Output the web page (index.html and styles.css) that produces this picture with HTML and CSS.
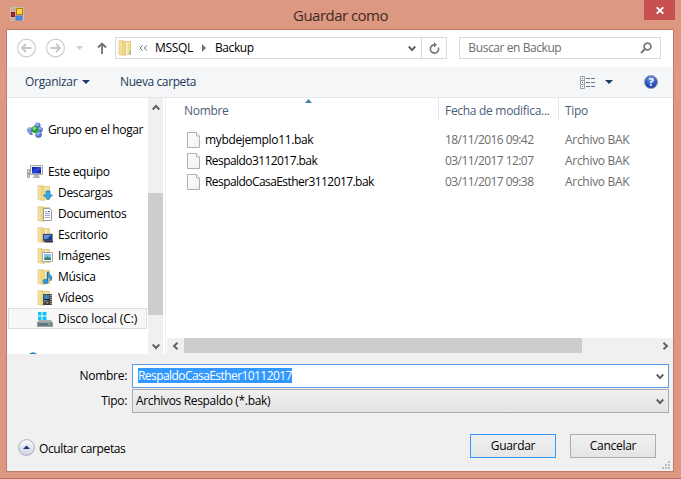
FILE: index.html
```html
<!DOCTYPE html>
<html lang="es">
<head>
<meta charset="utf-8">
<title>Guardar como</title>
<link rel="stylesheet" href="styles.css">
</head>
<body>
<svg class="defs" width="0" height="0">
  <defs>
    <linearGradient id="gold" x1="0" x2="1"><stop offset="0" stop-color="#f9ecb5"/><stop offset=".6" stop-color="#ecd27c"/><stop offset="1" stop-color="#f5e399"/></linearGradient>
    <linearGradient id="paper" x1="0" y1="0" x2="1" y2="1"><stop offset="0" stop-color="#fff"/><stop offset="1" stop-color="#efefef"/></linearGradient>
    <radialGradient id="ball" cx=".4" cy=".3" r=".8"><stop offset="0" stop-color="#a9c4f5"/><stop offset="1" stop-color="#2546a8"/></radialGradient>
    <linearGradient id="screen" x1="0" y1="0" x2="1" y2="1"><stop offset="0" stop-color="#0a1590"/><stop offset=".5" stop-color="#2c49dc"/><stop offset="1" stop-color="#0714a0"/></linearGradient>
    <linearGradient id="round" x1="0" y1="0" x2="0" y2="1"><stop offset="0" stop-color="#fff"/><stop offset=".5" stop-color="#e2e5ec"/><stop offset="1" stop-color="#d2d7e4"/></linearGradient>
    <symbol id="folder" viewBox="0 0 16 16">
      <path d="M5 1.500h7.500v13H5z" fill="#f0db91" stroke="#dcc47c" stroke-width=".8"/>
      <path d="M1 .8h5l1.300 1.400v13.300L1 14.600z" fill="url(#gold)" stroke="#d9c078" stroke-width=".7"/>
      <path d="M8 2.300h1.500v12.200H8z" fill="#fff3bd"/>
    </symbol>
    <symbol id="file" viewBox="0 0 14 16">
      <path d="M.5.5h9l3 3.500v11.500H.5z" fill="url(#paper)" stroke="#b0b0b0"/><path d="M9.500.5v3.500h3" fill="#f8f8f8" stroke="#b5b5b5"/>
    </symbol>
    <symbol id="down" viewBox="0 0 8 7"><path d="M.7 1.500L4 5l3.300-3.500" fill="none" stroke="#606060" stroke-width="1.900"/></symbol>
  </defs>
</svg>
<div class="window">
  <header class="titlebar">
    <svg class="app-icon" width="14" height="14" viewBox="0 0 14 14"><rect width="14" height="14" fill="#c7b9b4"/><rect x="1.5" y="1.5" width="4" height="2.5" fill="#dfa48f"/><rect x="6.5" y="1.5" width="6" height="6" fill="#ffd43e" stroke="#b98000"/><rect x="1.5" y="5.5" width="3" height="4" fill="#c3231e" stroke="#8a1411"/><rect x="6" y="9" width="6" height="4" fill="#4d8cf0" stroke="#3265bd" stroke-width=".7"/><path d="M1.5 11h1.2v2H1.5zM3.8 11H5v2H3.8z" fill="#df9e8a"/></svg>
    <h1 class="title">Guardar como</h1>
    <button class="close" aria-label="Cerrar"><svg width="8" height="7" viewBox="0 0 8 7"><path d="M.7.3l6.6 6.4M7.3.3L.7 6.7" stroke="#fff" stroke-width="1.8"/></svg></button>
  </header>
  <main class="dialog">
    <nav class="address-row">
      <svg class="nav-arrow" width="20" height="20" viewBox="0 0 20 20"><circle cx="9.500" cy="10" r="8.900" fill="none" stroke="#cfcfcf" stroke-width="1.2"/><path d="M14.500 10H5.500M9 6L5 10l4 4" fill="none" stroke="#c6c6c6" stroke-width="1.8"/></svg>
      <svg class="nav-arrow forward" width="20" height="20" viewBox="0 0 20 20"><circle cx="9.500" cy="10" r="8.900" fill="none" stroke="#cfcfcf" stroke-width="1.2"/><path d="M4.500 10h9M10 6l4 4-4 4" fill="none" stroke="#c6c6c6" stroke-width="1.8"/></svg>
      <svg class="recent" width="7" height="4" viewBox="0 0 7 4"><path d="M0 0h7L3.5 4z" fill="#cfcfcf"/></svg>
      <svg class="up" width="10" height="12" viewBox="0 0 10 12"><path d="M5 12V2M1 5.500l4-4 4 4" fill="none" stroke="#727272" stroke-width="1.800"/></svg>
      <div class="address">
        <svg class="address-folder" width="16" height="16"><use href="#folder"/><rect x="11.5" y="11" width="1" height="3" fill="#4fb4d4"/></svg>
        <svg class="chevrons" width="9" height="6" viewBox="0 0 9 6"><path d="M3.500.500L1 3l2.500 2.500M7.800.500L5.300 3l2.500 2.500" fill="none" stroke="#666" stroke-width="1"/></svg>
        <span class="crumb first">MSSQL</span>
        <svg class="sep" width="4" height="8" viewBox="0 0 4 8"><path d="M0 0l4 4-4 4z" fill="#707070"/></svg>
        <span class="crumb second">Backup</span>
        <svg class="address-down" width="8" height="7"><use href="#down"/></svg>
        <span class="refresh"><svg width="11" height="12" viewBox="0 0 11 12"><path d="M9.300 5.500A4.100 4.100 0 1 1 5 2.900" fill="none" stroke="#777" stroke-width="1.600"/><path d="M5 0v5.500L8 2.700z" fill="#777"/></svg></span>
      </div>
      <div class="search"><span>Buscar en Backup</span><svg width="12" height="12" viewBox="0 0 12 12"><circle cx="7.500" cy="4.500" r="3.400" fill="none" stroke="#777" stroke-width="1.800"/><path d="M5 7L1 11" stroke="#777" stroke-width="2.200"/></svg></div>
    </nav>
    <div class="toolbar">
      <span class="organize">Organizar</span><svg width="8" height="4" viewBox="0 0 8 4"><path d="M0 0h8L4 4z" fill="#1e3b6e"/></svg>
      <span class="new-folder">Nueva carpeta</span>
      <svg class="view" width="16" height="13" viewBox="0 0 16 13"><path d="M.500.500h4v12h-4zM.500 4.500h4M.500 8.500h4" fill="#fff" stroke="#98a0aa"/><path d="M2 2h1v1H2zM2 10h1v1H2z" fill="#456"/><path d="M2 6h1v1H2z" fill="#c22"/><path d="M6 2.500h4M11 2.500h4M6 6.500h4M11 6.500h4M6 10.500h4M11 10.500h4" stroke="#667386"/></svg>
      <svg class="view-down" width="8" height="4" viewBox="0 0 8 4"><path d="M0 0h8L4 4z" fill="#173a63"/></svg>
      <span class="help">?</span>
    </div>
    <div class="browser">
      <aside class="places">
        <div class="place root group"><svg width="16" height="16" viewBox="0 0 16 16"><g fill="url(#ball)"><circle cx="10.500" cy="3.500" r="3"/><circle cx="3" cy="8" r="2.800"/><circle cx="13.200" cy="7.500" r="2.600"/><circle cx="11.500" cy="12.500" r="3.300"/><path d="M1 8.500q3 0 5 4l-2 .500Q1 12 1 8.500z"/></g><circle cx="8" cy="7.500" r="3.600" fill="#2f9d43"/><circle cx="7.400" cy="6.300" r="1.600" fill="#94dc91"/></svg>Grupo en el hogar</div>
        <div class="place root"><svg width="16" height="16" viewBox="0 0 16 16"><path d="M.5 5.500h2v8h-2z" fill="#ddd" stroke="#888" stroke-width=".7"/><path d="M1 9h1v1.500H1z" fill="#31a52e"/><path d="M3.500 1.500h12v9h-12z" fill="#eee" stroke="#aaa"/><path d="M5 3h9v6.500H5z" fill="url(#screen)"/><path d="M7 11h5v1.500l2 1.500H5l2-1.500z" fill="#b2b2b2"/></svg>Este equipo</div>
        <div class="place"><svg width="16" height="16" viewBox="0 0 16 16"><use href="#folder"/><path d="M9 6h4v4h2.500l-4.500 5-4.500-5H9z" fill="#36a6e8" stroke="#1a78b8" stroke-width=".7"/></svg>Descargas</div>
        <div class="place"><svg width="16" height="16" viewBox="0 0 16 16"><use href="#folder"/><path d="M6.500 2.500h6l2 2v10h-8z" fill="#fff" stroke="#999"/><path d="M8 5.500h2M8 7.500h5M8 9.500h5M8 11.500h5" stroke="#8cabd6"/><path d="M11 5h2v1h-2z" fill="#36b"/></svg>Documentos</div>
        <div class="place"><svg width="16" height="16" viewBox="0 0 16 16"><use href="#folder"/><path d="M6 7h9.500v7H6z" fill="#203f86" stroke="#777" stroke-width=".5"/><path d="M7 8h7l-4 4H7z" fill="#638ed2"/><path d="M7 14h9v1.500H8z" fill="#333"/></svg>Escritorio</div>
        <div class="place"><svg width="16" height="16" viewBox="0 0 16 16"><use href="#folder"/><path d="M5.500 4.500h10v9h-10z" fill="#fff" stroke="#a6a6a6"/><path d="M7 6h7v6H7z" fill="#7ec4e9"/><path d="M7 10.500l3-2 4 1.500v2H7z" fill="#398575"/></svg>Imágenes</div>
        <div class="place"><svg width="16" height="16" viewBox="0 0 16 16"><use href="#folder"/><path d="M11 2.500q.5 3 3.500 4.500 1 3-1 5 .500-3-2.500-4" fill="#3aa4e1" stroke="#1878b7" stroke-width=".8"/><path d="M10.500 3v9" stroke="#1878b7" stroke-width="1.500"/><ellipse cx="8.600" cy="12.500" rx="2.600" ry="2.200" fill="#269ce1" stroke="#126aa4" stroke-width=".6"/></svg>Música</div>
        <div class="place"><svg width="16" height="16" viewBox="0 0 16 16"><use href="#folder"/><path d="M6 4h9v11H6z" fill="#4c4c4c"/><path d="M7 5h5v9H7z" fill="#3d83bd"/><path d="M7 9.500h5M8 13l4-3v4H8z" stroke="#222" fill="#e79252"/><path d="M14 5v10" stroke="#eee" stroke-dasharray="1 1"/></svg>Vídeos</div>
        <div class="place selected"><svg width="16" height="16" viewBox="0 0 16 16"><path d="M2 9h12l2 2.500v4H0v-4z" fill="#a7adaf"/><path d="M.5 11.500h15v4H.5z" fill="#727b7f" stroke="#959b9e"/><path d="M2 13.500h9" stroke="#3a7785"/><path d="M11.500 13h2v1h-2z" fill="#78df48"/><path d="M1 1h3.500v3.500H1zM5.500 1h4v3.500h-4zM1 5.500h3.500V9H1zM5.500 5.500h4V9h-4z" fill="#10c4f2"/></svg>Disco local (C:)</div>
        <svg class="network" width="8" height="2" viewBox="0 0 8 2"><path d="M0 2Q4-1.500 8 2z" fill="#2e86b4"/></svg>
      </aside>
      <div class="vscroll">
        <svg width="8" height="7"><use href="#down" width="8" height="7" transform="rotate(180 4 3.500)"/></svg>
        <div class="vthumb"></div>
        <svg width="8" height="7"><use href="#down"/></svg>
      </div>
      <section class="files">
        <div class="grid head"><span class="name-head">Nombre<svg class="sort" width="7" height="4" viewBox="0 0 7 4"><path d="M3.500 0L7 4H0z" fill="#4684a8"/></svg></span><span class="divided">Fecha de modifica...</span><span class="divided">Tipo</span></div>
        <div class="grid file"><span class="name"><svg width="14" height="16"><use href="#file"/></svg>mybdejemplo11.bak</span><span class="date">18/11/2016 09:42</span><span>Archivo BAK</span></div>
        <div class="grid file"><span class="name digits"><svg width="14" height="16"><use href="#file"/></svg>Respaldo3112017.bak</span><span class="date">03/11/2017 12:07</span><span>Archivo BAK</span></div>
        <div class="grid file"><span class="name digits"><svg width="14" height="16"><use href="#file"/></svg>RespaldoCasaEsther3112017.bak</span><span class="date">03/11/2017 09:38</span><span>Archivo BAK</span></div>
        <div class="hscroll">
          <svg width="7" height="8" viewBox="0 0 7 8"><use href="#down" width="8" height="7" transform="translate(7 0) rotate(90)"/></svg>
          <div class="hthumb"></div>
          <svg width="7" height="8" viewBox="0 0 7 8"><use href="#down" width="8" height="7" transform="translate(0 8) rotate(-90)"/></svg>
        </div>
      </section>
    </div>
    <footer class="bottom">
      <div class="field"><label>Nombre:</label><div class="box active"><span class="marked">RespaldoCasaEsther10112017</span><svg width="8" height="7"><use href="#down"/></svg></div></div>
      <div class="field"><label>Tipo:</label><div class="box"><span class="value">Archivos Respaldo (*.bak)</span><svg width="8" height="7"><use href="#down"/></svg></div></div>
      <div class="actions">
        <svg width="17" height="17" viewBox="0 0 17 17"><circle cx="8.500" cy="8.500" r="7.900" fill="url(#round)" stroke="#a5acbd"/><path d="M8.500 6.500L12 10H5z" fill="#1e3685"/></svg>
        <span class="hide">Ocultar carpetas</span>
        <button class="btn primary">Guardar</button><button class="btn">Cancelar</button>
      </div>
      <svg class="grip" width="8" height="8" viewBox="0 0 8 8"><path d="M6 0h2v2H6zM3 3h2v2H3zM6 3h2v2H6zM0 6h2v2H0zM3 6h2v2H3zM6 6h2v2H6z" fill="#bcbcbc"/></svg>
    </footer>
  </main>
</div>
</body>
</html>
```
FILE: styles.css
```css
* { box-sizing: border-box; }
body { margin: 0; font: 12px/16px "Open Sans", "Noto Sans", sans-serif; letter-spacing: -0.3px; color: #000; }
svg { display: block; flex: none; }
span { white-space: nowrap; }
.defs { position: absolute; }
.window { height: 479px; width: 681px; background: #dd9881; border-bottom: 1px solid #b3705c; overflow: hidden; padding: 0 7px; }
.titlebar { height: 29px; display: flex; align-items: flex-start; }
.app-icon { margin: 7px 0 0 3px; }
.title { margin: 5px 0 0 269px; width: 120px; font-size: 15px; line-height: 20px; font-weight: 400; letter-spacing: -0.52px; color: #3d2a25; white-space: nowrap; }
.close { margin: 0 -1px 0 auto; width: 31px; height: 20px; border: 0; padding: 0; background: #c75050; display: flex; align-items: center; justify-content: center; }
.dialog { margin: 0 0 0 -1px; height: 443px; border: 1px solid #be7c68; background: #fff; }
.address-row { height: 37px; display: flex; align-items: center; padding: 0 12px 1px 10px; }
.forward { margin-left: 9px; }
.recent { margin-left: 10px; }
.up { margin-left: 14px; }
.address { margin-left: 8px; width: 333px; height: 22px; border: 1px solid #d9d9d9; display: flex; align-items: center; }
.address-folder { margin-left: 2px; }
.chevrons { margin-left: 5px; }
.first { margin-left: 7px; width: 38px; }
.sep { margin-left: 9px; }
.second { margin-left: 9px; letter-spacing: -0.4px; }
.address-down { margin-left: auto; margin-right: 5px; }
.refresh { width: 25px; height: 20px; border-left: 1px solid #d9d9d9; display: flex; align-items: center; justify-content: center; }
.search { margin-left: 12px; width: 202px; height: 22px; border: 1px solid #d9d9d9; display: flex; align-items: center; justify-content: space-between; padding: 0 8px; color: #6d6d6d; letter-spacing: -0.42px; }
.toolbar { height: 31px; background: #f5f6f7; border-bottom: 1px solid #e3e8ee; display: flex; align-items: center; padding-left: 18px; color: #1e395b; }
.organize { width: 57px; }
.new-folder { margin-left: 30px; letter-spacing: -0.4px; }
.view { margin-left: auto; }
.view-down { margin-left: 9px; }
.help { width: 14px; height: 14px; margin: 0 15px 0 31px; border-radius: 50%; background: radial-gradient(circle at 50% 25%, #6f9bf0, #1a3fae 75%); border: 1px solid #8c96ad; color: #fff; font-size: 11px; font-weight: 700; line-height: 12px; text-align: center; }
.browser { height: 256px; display: flex; }
.places { width: 141px; padding-top: 21px; height: 256px; overflow: hidden; }
.place { height: 21px; display: flex; align-items: center; gap: 5px; padding-left: 30px; white-space: nowrap; }
.root { padding-left: 20px; letter-spacing: -0.37px; }
.group { margin-bottom: 21px; }
.selected { margin: 0 1px; padding-left: 28px; border: 1px solid #dedede; background: #f7f7f7; letter-spacing: -0.05px; }
.network { margin: 23px 0 0 22px; }
.vscroll { width: 15px; background: #f0f0f0; display: flex; flex-direction: column; align-items: center; padding: 6px 0 4px; }
.vthumb { width: 15px; height: 122px; margin: 82px 0 28px; background: #cdcdcd; }
.files { flex: 1; margin-left: 2px; border-left: 1px solid #f0f0f0; padding-left: 2px; display: flex; flex-direction: column; }
.grid { display: grid; grid-template-columns: 270px 120px 1fr; height: 21px; align-items: center; color: #6d6d6d; }
.grid > span { padding-left: 7px; }
.head { height: 31px; align-items: start; color: #4c607a; }
.head > span { height: 22px; padding-top: 5px; }
.grid .name-head { padding-left: 16px; position: relative; }
.sort { position: absolute; left: 137px; top: 1px; }
.head .divided { border-left: 1px solid #dfeaf7; padding-left: 6px; }
.grid .name { padding-left: 19px; display: flex; gap: 4px; color: #000; letter-spacing: -0.35px; }
.grid .digits { letter-spacing: -0.57px; }
.date { letter-spacing: -0.56px; }
.hscroll { margin-top: auto; height: 16px; background: #f0f0f0; display: flex; align-items: center; padding: 0 4px 0 5px; margin-left: -1px; }
.hthumb { width: 398px; height: 15px; margin: 0 auto 1px 5px; background: #cdcdcd; }
.bottom { height: 117px; background: #f0f0f0; padding: 10px 4px 0 0; position: relative; }
.field { display: flex; align-items: center; margin-bottom: 1px; }
.field label { width: 120px; margin-right: 5px; text-align: right; }
.box { flex: 1; height: 24px; border: 1px solid #acacac; background: linear-gradient(#f0f0f0, #e4e4e4); display: flex; align-items: center; justify-content: space-between; padding: 0 4px 0 3px; }
.value { letter-spacing: -0.33px; }
.active { border-color: #569de5; background: #fff; padding-left: 5px; }
.marked { background: #39f; color: #fff; line-height: 15px; margin-bottom: 2px; letter-spacing: -0.57px; }
.actions { display: flex; align-items: center; margin-top: 21px; padding-left: 11px; }
.actions > svg { margin-top: 2px; }
.hide { margin: 6px auto 0 4px; letter-spacing: -0.38px; }
.btn { width: 86px; height: 24px; padding: 0; border: 1px solid #acacac; background: linear-gradient(#f0f0f0, #e5e5e5); font: inherit; letter-spacing: inherit; color: #000; margin-right: 14px; }
.btn:last-child { margin-right: 13px; }
.primary { border-color: #39f; }
.grip { position: absolute; right: 3px; bottom: 2px; }
```
